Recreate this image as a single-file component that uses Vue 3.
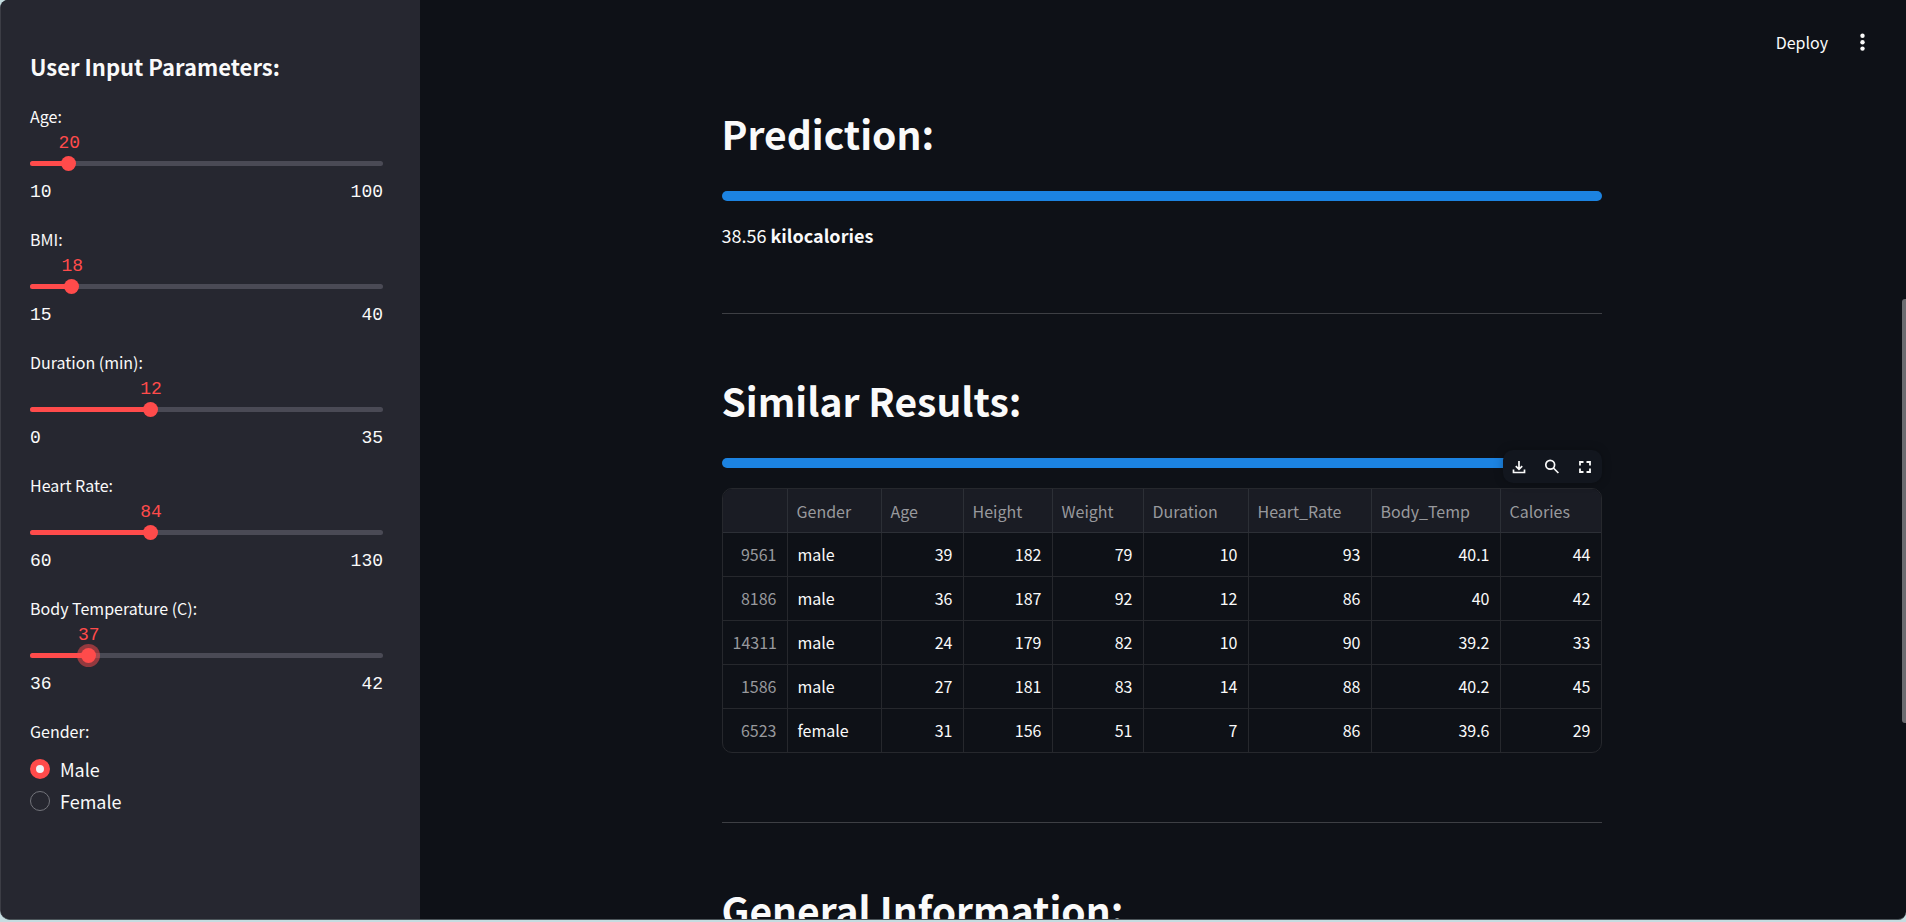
<script setup>
import { reactive, ref } from 'vue'

const sliders = reactive([
  { id: 'age', label: 'Age:', min: 10, max: 100, value: 20 },
  { id: 'bmi', label: 'BMI:', min: 15, max: 40, value: 18 },
  { id: 'duration', label: 'Duration (min):', min: 0, max: 35, value: 12 },
  { id: 'heart', label: 'Heart Rate:', min: 60, max: 130, value: 84 },
  { id: 'temp', label: 'Body Temperature (C):', min: 36, max: 42, value: 37, active: true },
])
const gender = ref('Male')
const genders = ['Male', 'Female']
const percent = (s) => ((s.value - s.min) / (s.max - s.min)) * 100 + '%'

const columns = ['Gender', 'Age', 'Height', 'Weight', 'Duration', 'Heart_Rate', 'Body_Temp', 'Calories']
const rows = [
  [9561, 'male', 39, 182, 79, 10, 93, 40.1, 44],
  [8186, 'male', 36, 187, 92, 12, 86, 40, 42],
  [14311, 'male', 24, 179, 82, 10, 90, 39.2, 33],
  [1586, 'male', 27, 181, 83, 14, 88, 40.2, 45],
  [6523, 'female', 31, 156, 51, 7, 86, 39.6, 29],
]
</script>

<template>
  <div class="app">
    <aside class="sidebar">
      <h2 class="side-title">User Input Parameters:</h2>
      <div v-for="s in sliders" :key="s.id" class="field">
        <label class="label" :for="s.id">{{ s.label }}</label>
        <div class="value-row">
          <output class="value" :for="s.id" :style="{ left: percent(s) }">{{ s.value }}</output>
        </div>
        <div class="slider">
          <div class="rail"><div class="fill" :style="{ width: percent(s) }"></div></div>
          <input :id="s.id" v-model.number="s.value" type="range" :min="s.min" :max="s.max" :class="{ active: s.active }">
        </div>
        <div class="limits"><span>{{ s.min }}</span><span>{{ s.max }}</span></div>
      </div>
      <fieldset class="genders">
        <legend class="label">Gender:</legend>
        <label v-for="g in genders" :key="g" class="radio">
          <input v-model="gender" type="radio" name="gender" :value="g">
          <span>{{ g }}</span>
        </label>
      </fieldset>
    </aside>

    <main class="main">
      <header class="topbar">
        <button type="button" class="deploy">Deploy</button>
        <button type="button" class="icon-btn" aria-label="Menu">
          <svg width="20" height="20" viewBox="0 0 20 20" fill="currentColor">
            <circle cx="9.5" cy="3.8" r="2.2" /><circle cx="9.5" cy="10.2" r="2.2" /><circle cx="9.5" cy="16.6" r="2.2" />
          </svg>
        </button>
      </header>

      <div class="content">
        <h2 class="heading">Prediction:</h2>
        <div class="progress"></div>
        <p class="result">38.56 <strong>kilocalories</strong></p>
        <hr>

        <h2 class="heading">Similar Results:</h2>
        <div class="progress"></div>
        <div class="frame">
          <div class="toolbar">
            <button type="button" class="icon-btn" aria-label="Download">
              <svg width="16" height="16" viewBox="0 0 16 16" fill="none" stroke="currentColor" stroke-width="1.7">
                <path d="M8 2v8M4.8 7.2 8 10.4l3.2-3.2M2.5 10.5v3h11v-3" />
              </svg>
            </button>
            <button type="button" class="icon-btn" aria-label="Search">
              <svg width="16" height="16" viewBox="0 0 16 16" fill="none" stroke="currentColor" stroke-width="1.7">
                <circle cx="6.2" cy="5.8" r="4.4" /><path d="m9.4 9 5 5" />
              </svg>
            </button>
            <button type="button" class="icon-btn" aria-label="Fullscreen">
              <svg width="16" height="16" viewBox="0 0 16 16" fill="none" stroke="currentColor" stroke-width="1.8">
                <path d="M3 6.5V3h3.5M9.5 3H13v3.5M13 9.5V13H9.5M6.5 13H3V9.5" />
              </svg>
            </button>
          </div>
          <div class="table-box">
            <table>
              <colgroup>
                <col class="c-index"><col class="c-gender"><col class="c-age"><col class="c-height"><col class="c-weight">
                <col class="c-duration"><col class="c-heart"><col class="c-temp"><col>
              </colgroup>
              <thead>
                <tr><td></td><th v-for="c in columns" :key="c" scope="col">{{ c }}</th></tr>
              </thead>
              <tbody>
                <tr v-for="r in rows" :key="r[0]">
                  <th scope="row">{{ r[0] }}</th>
                  <td v-for="(v, i) in r.slice(1)" :key="i" :class="{ text: i === 0 }">{{ v }}</td>
                </tr>
              </tbody>
            </table>
          </div>
        </div>
        <hr>

        <h2 class="heading">General Information:</h2>
      </div>
      <div class="scroll-thumb"></div>
    </main>
  </div>
</template>

<style>
html {
  background: #c5dce0;
}
body {
  overflow: hidden;
}
</style>

<style scoped>
.app {
  display: flex;
  box-sizing: border-box;
  height: calc(100vh - 2px);
  overflow: hidden;
  border-left: 1px solid #3c3d45;
  border-bottom: 1px solid #4b5459;
  border-radius: 8px 0 8px 10px;
  background: #0e1117;
  color: #fafafa;
  font-family: "Noto Sans CJK SC", "Noto Sans", sans-serif;
  font-size: 16px;
}
h2,
p,
hr,
fieldset {
  margin: 0;
  padding: 0;
  border: 0;
}
button {
  padding: 0;
  border: 0;
  background: none;
  color: inherit;
  font: inherit;
}
svg {
  display: block;
}
.sidebar {
  flex: 0 0 419px;
  box-sizing: border-box;
  padding: 50px 37px 0 29px;
  background: #262730;
}
.side-title {
  margin-bottom: 20px;
  font-size: 22px;
  font-weight: 700;
  line-height: 32px;
}
.field {
  margin-bottom: 20px;
}
.label {
  display: block;
  padding: 0;
  line-height: 28px;
}
.value-row {
  position: relative;
  height: 26px;
}
.value,
.limits {
  font-family: "Liberation Mono", monospace;
  font-size: 18px;
  line-height: 26px;
}
.value {
  position: absolute;
  color: #ff4b4b;
  transform: translateX(-50%);
}
.slider {
  position: relative;
  display: flex;
  align-items: center;
  height: 15px;
}
.rail {
  flex: 1;
  height: 5px;
  overflow: hidden;
  border-radius: 3px;
  background: #4a4a55;
}
.fill {
  height: 100%;
  background: #ff4b4b;
}
.slider input {
  position: absolute;
  inset: 0 -8px;
  width: calc(100% + 16px);
  height: 15px;
  margin: 0;
  appearance: none;
  background: none;
  outline: none;
}
.slider input::-webkit-slider-thumb {
  width: 15px;
  height: 15px;
  border-radius: 50%;
  appearance: none;
  background: #ff4b4b;
}
.slider input.active::-webkit-slider-thumb {
  box-shadow: 0 0 0 4px rgba(255, 75, 75, 0.5);
}
.limits {
  display: flex;
  justify-content: space-between;
  margin-top: 8px;
}
.radio {
  display: flex;
  align-items: center;
  gap: 10px;
  height: 32px;
  font-size: 18px;
}
.label + .radio {
  margin-top: 8px;
}
.radio input {
  width: 20px;
  height: 20px;
  box-sizing: border-box;
  margin: 0;
  border: 1px solid #73747b;
  border-radius: 50%;
  appearance: none;
}
.radio input:checked {
  border: 6px solid #ff4b4b;
  background: #f0f2f6;
}
.main {
  position: relative;
  flex: 1;
  min-width: 0;
  overflow: hidden;
  padding-right: 3px;
}
.topbar {
  display: flex;
  align-items: center;
  justify-content: flex-end;
  gap: 25px;
  height: 84px;
  margin-bottom: 19px;
  padding-right: 30px;
}
.deploy {
  line-height: 28px;
}
.content {
  max-width: 880px;
  margin: 0 auto;
}
.heading {
  margin-bottom: 28px;
  font-size: 39px;
  font-weight: 700;
  line-height: 60px;
  white-space: nowrap;
}
.progress {
  height: 10px;
  margin-bottom: 20px;
  border-radius: 5px;
  background: #1c83e1;
}
.result {
  margin-bottom: 64px;
  font-size: 18px;
  line-height: 28px;
}
hr {
  height: 1px;
  margin-bottom: 56px;
  background: #3d3f44;
}
.frame {
  position: relative;
  margin-bottom: 69px;
}
.toolbar {
  position: absolute;
  right: 0;
  bottom: 100%;
  display: flex;
  align-items: center;
  justify-content: space-around;
  width: 99px;
  height: 33px;
  margin-bottom: 5px;
  border-radius: 10px;
  background: #12161e;
  box-shadow: 0 0 10px rgba(0, 0, 0, 0.25);
}
.table-box {
  overflow: hidden;
  border: 1px solid #26282d;
  border-radius: 10px;
}
table {
  width: 100%;
  table-layout: fixed;
  border-spacing: 0;
}
.c-index { width: 65px; }
.c-gender { width: 94px; }
.c-age { width: 82px; }
.c-height { width: 89px; }
.c-weight { width: 91px; }
.c-duration { width: 105px; }
.c-heart { width: 123px; }
.c-temp { width: 129px; }
th,
td {
  box-sizing: border-box;
  height: 44px;
  padding: 0 10px 2px;
  border-right: 1px solid #26282d;
  border-bottom: 1px solid #26282d;
  line-height: 24px;
  text-align: right;
}
th {
  color: #98999d;
  font-weight: 400;
}
thead th,
thead td {
  padding: 0 9px;
  border-color: #2c2f36;
  background: #1a1c24;
  text-align: left;
}
.text {
  text-align: left;
}
tr > :last-child {
  border-right: 0;
}
tbody tr:last-child > * {
  height: 43px;
  border-bottom: 0;
}
.scroll-thumb {
  position: absolute;
  top: 299px;
  right: 0;
  width: 4px;
  height: 424px;
  border-radius: 3px 0 0 3px;
  background: #6b6c70;
}
</style>
